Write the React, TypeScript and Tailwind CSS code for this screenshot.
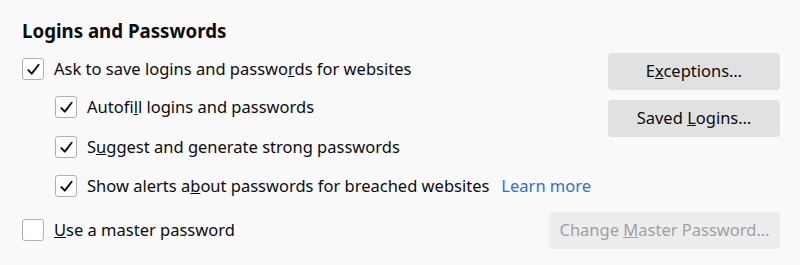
import React from "react";

function Check({ checked }: { checked: boolean }) {
  return (
    <span className="flex h-[22px] w-[22px] shrink-0 items-center justify-center rounded-[3px] border border-[#b1b1b3] bg-white">
      {checked && (
        <svg width="15" height="15" viewBox="0 0 14 14" fill="none">
          <path d="M2.2 7.6 L5.4 10.9 L11.8 2.6" stroke="#0c0c0d" strokeWidth="1.8" strokeLinecap="round" strokeLinejoin="round" />
        </svg>
      )}
    </span>
  );
}

function Row({ children, checked = true, indent = false, className = "" }: { children: React.ReactNode; checked?: boolean; indent?: boolean; className?: string }) {
  return (
    <label className={`flex h-[22px] items-center gap-[10px] leading-[22px] ${indent ? "pl-[33px]" : ""} ${className}`}>
      <Check checked={checked} />
      <span className="whitespace-nowrap">{children}</span>
    </label>
  );
}

function Btn({ children, disabled = false, className = "" }: { children: React.ReactNode; disabled?: boolean; className?: string }) {
  return (
    <button
      className={`h-[37px] whitespace-nowrap rounded-[4px] px-[10px] text-[16.5px] ${
        disabled ? "bg-[#ededee] text-[#a0a0a2]" : "bg-[#e1e1e2] text-[#0c0c0d]"
      } ${className}`}
    >
      {children}
    </button>
  );
}

export default function App() {
  return (
    <div
      className="h-[265px] w-[800px] bg-[#f9f9fa] pl-[22px] pr-[20px] pt-[17px] text-[16.5px] text-[#0c0c0d]"
      style={{ fontFamily: '"Noto Sans", sans-serif' }}
    >
      <h1 className="text-[18.7px] font-bold leading-[28px]">Logins and Passwords</h1>

      <div className="mt-[13px] flex justify-between">
        <div className="flex flex-col">
          <Row>
            Ask to save logins and passwo<u>r</u>ds for websites
          </Row>
          <Row indent className="mt-[16px]">
            Autofi<u>l</u>l logins and passwords
          </Row>
          <Row indent className="mt-[18px]">
            S<u>u</u>ggest and generate strong passwords
          </Row>
          <Row indent className="mt-[17px]">
            Show alerts a<u>b</u>out passwords for breached websites
            <a className="ml-3 text-[#1f74de]">Learn more</a>
          </Row>
        </div>
        <div className="-mt-[5px] flex w-[172px] flex-col gap-[10px]">
          <Btn>
            E<u>x</u>ceptions…
          </Btn>
          <Btn>
            Saved <u>L</u>ogins…
          </Btn>
        </div>
      </div>

      <div className="mt-[22px] flex h-[22px] items-center justify-between">
        <Row checked={false}>
          <u>U</u>se a master password
        </Row>
        <Btn disabled className="w-[231px]">
          Change <u>M</u>aster Password…
        </Btn>
      </div>
    </div>
  );
}
